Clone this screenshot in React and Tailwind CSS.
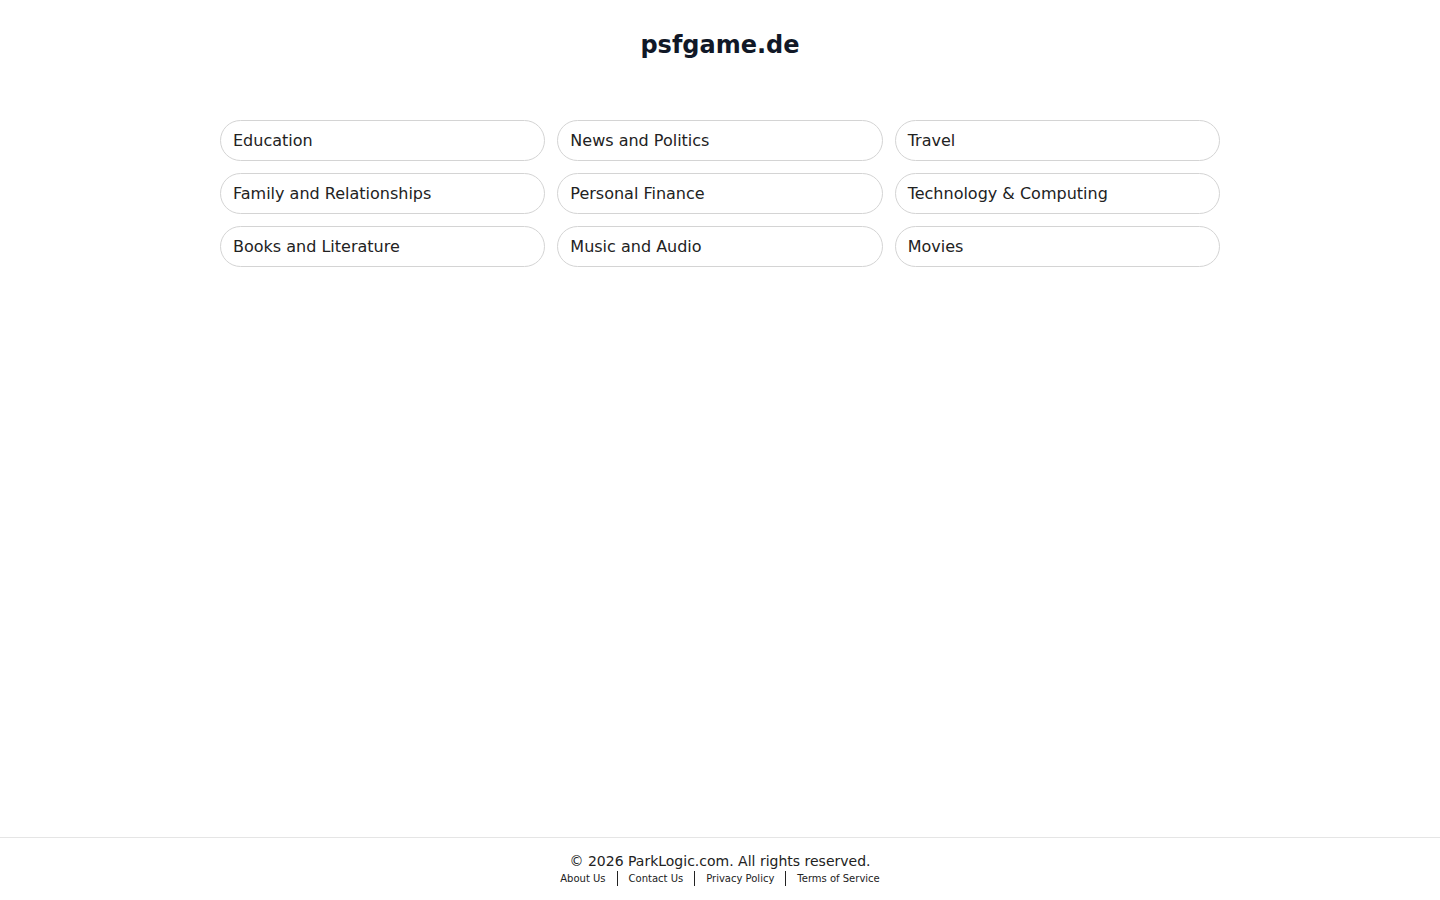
export default function App() {
  const cats = [
    'Education', 'News and Politics', 'Travel',
    'Family and Relationships', 'Personal Finance', 'Technology & Computing',
    'Books and Literature', 'Music and Audio', 'Movies',
  ]
  const links = ['About Us', 'Contact Us', 'Privacy Policy', 'Terms of Service']
  return (
    <div className="min-h-screen flex flex-col bg-white" style={{ fontFamily: '"DejaVu Sans", sans-serif' }}>
      <main className="flex-1">
        <h1 className="text-center text-2xl font-bold text-[#111827] pt-[29px] leading-8">psfgame.de</h1>
        <div className="mx-auto w-[1000px] mt-[59px] grid grid-cols-3 gap-3">
          {cats.map(c => (
            <a key={c} href="#" className="block h-[41px] leading-[39px] rounded-full border border-[#d4d4d4] pl-3 text-base text-[#222]">
              {c}
            </a>
          ))}
        </div>
      </main>
      <footer className="border-t border-[#e5e5e5] h-[63px] pt-[13px] text-center">
        <div className="text-sm text-[#222] leading-5">© 2026 ParkLogic.com. All rights reserved.</div>
        <div className="flex justify-center items-center text-[10px] text-[#222] leading-4">
          {links.map((l, i) => (
            <a key={l} href="#" className={i ? 'border-l-[1.5px] border-[#222] pl-[11px] ml-[11px] leading-[15px]' : 'leading-[15px]'}>{l}</a>
          ))}
        </div>
      </footer>
    </div>
  )
}
